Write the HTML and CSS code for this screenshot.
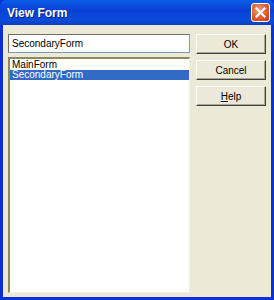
FILE: index.html
```html
<!DOCTYPE html>
<html lang="en">
<head>
  <meta charset="UTF-8">
  <title>View Form</title>
  <link rel="stylesheet" href="styles.css">
</head>
<body>
  <div class="window">
    <div class="titlebar">
      <span class="title">View Form</span>
      <button class="close-btn" aria-label="Close">
        <svg width="13" height="13" viewBox="0 0 13 13">
          <path d="M2.5 2.5 L10.5 10.5 M10.5 2.5 L2.5 10.5" stroke="#fff" stroke-width="2.2" stroke-linecap="square"/>
        </svg>
      </button>
    </div>
    <div class="client">
      <div class="left">
        <input class="name-input" type="text" value="SecondaryForm">
        <div class="listbox">
          <div class="item">MainForm</div>
          <div class="item selected">SecondaryForm</div>
        </div>
      </div>
      <div class="buttons">
        <button class="btn">OK</button>
        <button class="btn">Cancel</button>
        <button class="btn"><u>H</u>elp</button>
      </div>
    </div>
  </div>
</body>
</html>
```
FILE: styles.css
```css
body {
  margin: 0;
  font-family: "Liberation Sans", sans-serif;
  font-size: 11px;
}
.window {
  width: 274px;
  height: 300px;
  box-sizing: border-box;
  background: #0831d9;
  padding: 0 3px 3px 3px;
  display: flex;
  flex-direction: column;
}
.titlebar {
  height: 25px;
  margin: 0 -3px;
  padding: 0 4px 0 7px;
  display: flex;
  align-items: center;
  justify-content: space-between;
  background: linear-gradient(#0a5fe8, #0a3fd6 40%, #0b4ad9 80%, #0a3ec4);
  border-radius: 6px 6px 0 0;
}
.title {
  color: #fff;
  font-family: "Liberation Sans", sans-serif;
  font-weight: bold;
  font-size: 12px;
  text-shadow: 1px 1px #0a1e6e;
}
.close-btn {
  width: 19px;
  height: 19px;
  padding: 0;
  border: 1px solid #fff;
  border-radius: 3px;
  background: radial-gradient(circle at 40% 35%, #f0a080, #e05a2b 55%, #c83a10);
  display: flex;
  align-items: center;
  justify-content: center;
}
.client {
  flex: 1;
  background: #ece9d8;
  display: flex;
  padding: 9px 5px 4px 5px;
  gap: 6px;
}
.left {
  width: 182px;
  display: flex;
  flex-direction: column;
  gap: 4px;
}
.name-input {
  height: 19px;
  box-sizing: border-box;
  margin: 0;
  border: 1px solid #7f9db9;
  border-top-color: #716f64;
  border-left-color: #716f64;
  padding: 0 3px;
  font-family: "Liberation Sans", sans-serif;
  font-size: 10px;
  color: #000;
  background: #fff;
}
.listbox {
  flex: 1;
  background: #fff;
  border-top: 2px solid #8d8961;
  border-left: 2px solid #8d8961;
  border-right: 1px solid #f1efe2;
  border-bottom: 1px solid #f1efe2;
  padding-top: 1px;
}
.item {
  height: 10px;
  line-height: 10px;
  padding-left: 2px;
  font-size: 10px;
  color: #000;
}
.item.selected {
  background: #316ac5;
  color: #fff;
}
.buttons {
  display: flex;
  flex-direction: column;
  gap: 6px;
}
.btn {
  width: 70px;
  height: 20px;
  margin: 0;
  padding: 0;
  background: #ece9d8;
  border: 1px solid #fff;
  border-right-color: #404040;
  border-bottom-color: #404040;
  box-shadow: inset -1px -1px #aca899;
  font-family: "Liberation Sans", sans-serif;
  font-size: 10px;
  color: #000;
}
```
